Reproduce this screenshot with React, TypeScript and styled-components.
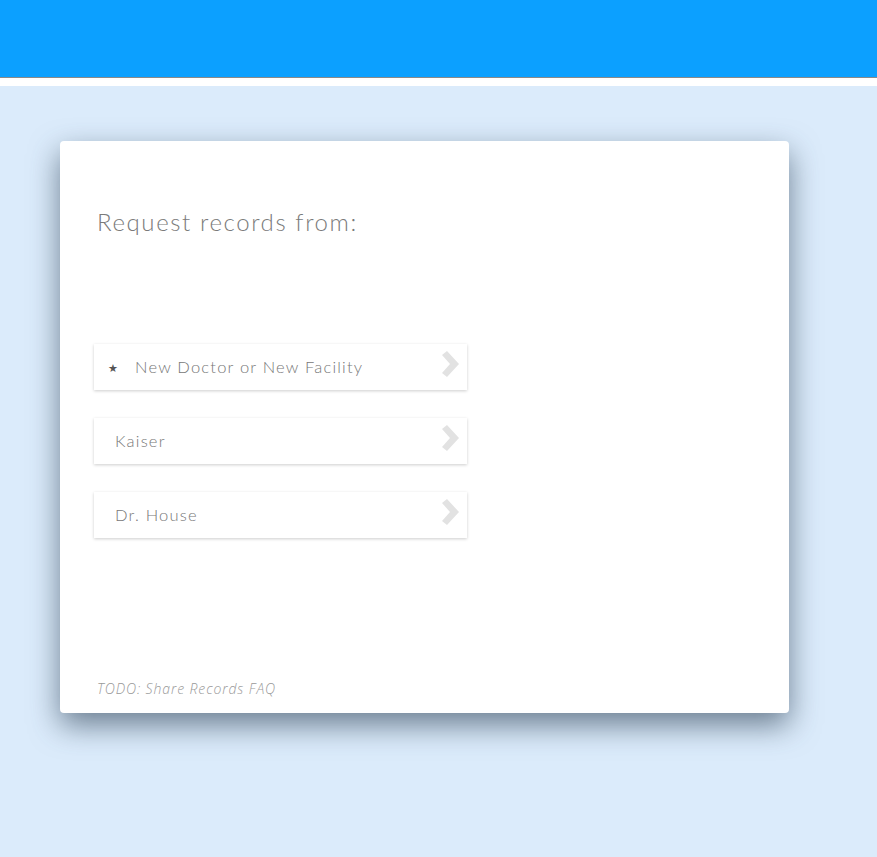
import styled, { createGlobalStyle } from "styled-components"

const GlobalStyle = createGlobalStyle`
  html, body {
    margin: 0;
    padding: 0;
    background: #dbebfb;
  }
  body {
    font-family: "Lato", "Open Sans", sans-serif;
  }
`

interface Provider {
  name: string
  isNew?: boolean
}

const providers: Provider[] = [
  { name: "New Doctor or New Facility", isNew: true },
  { name: "Kaiser" },
  { name: "Dr. House" },
]

const Chevron = () => (
  <svg width="20" height="26" viewBox="0 0 20 26">
    <path d="M2 4 L7 0 L19 13 L7 26 L2 22 L10 13 Z" fill="#e2e2e2" />
  </svg>
)

const App = () => {
  return (
    <Page>
      <GlobalStyle />
      <Header>
        <TopBar />
      </Header>
      <Content>
        <Card>
          <Title>Request records from:</Title>
          <List>
            {providers.map((p) => (
              <ProviderRow key={p.name}>
                {p.isNew && <Star>★</Star>}
                <ProviderName $indent={!p.isNew}>{p.name}</ProviderName>
                <ChevronBox>
                  <Chevron />
                </ChevronBox>
              </ProviderRow>
            ))}
          </List>
          <Footer>TODO: Share Records FAQ</Footer>
        </Card>
      </Content>
    </Page>
  )
}

export default App

const Page = styled.div`
  min-height: 857px;
  background: #dbebfb;
`

//Header
const Header = styled.div`
  background: #fff;
  padding-bottom: 8px;
`

const TopBar = styled.div`
  height: 77px;
  background: #0ca0ff;
  border-bottom: 1px solid #8a8a8a;
`

const Content = styled.div`
  background: #dbebfb;
  padding: 55px 0 0 60px;
  height: 716px;
`

const Card = styled.div`
  width: 729px;
  height: 572px;
  box-sizing: border-box;
  background: #fff;
  border-radius: 4px;
  box-shadow: 0 12px 30px rgba(50, 70, 90, 0.66);
  padding: 64px 0 0 34px;
  display: flex;
  flex-direction: column;
`

const Title = styled.h1`
  margin: 0 0 0 3px;
  font-family: "Lato", sans-serif;
  font-weight: 300;
  font-size: 24px;
  letter-spacing: 1.6px;
  color: #7a7a7a;
  line-height: 34px;
`

const List = styled.div`
  margin-top: 105px;
  display: flex;
  flex-direction: column;
  gap: 28px;
`

const ProviderRow = styled.div`
  width: 373px;
  height: 46px;
  display: flex;
  align-items: center;
  background: #fff;
  box-shadow: 0 1px 3px rgba(0, 0, 0, 0.2);
  padding: 0 7px 0 14px;
  box-sizing: border-box;
`

const Star = styled.span`
  font-size: 11px;
  color: #555;
  width: 27px;
  margin-top: 2px;
`

const ProviderName = styled.span<{ $indent: boolean }>`
  flex: 1;
  padding-left: ${(p) => (p.$indent ? "7px" : "0")};
  font-family: "Lato", sans-serif;
  font-weight: 300;
  font-size: 16.5px;
  letter-spacing: 1.2px;
  color: #777;
`

const ChevronBox = styled.div`
  display: flex;
  align-items: center;
  margin-top: -6px;
`

const Footer = styled.p`
  margin: auto 0 15px 3px;
  font-family: "Open Sans", sans-serif;
  font-style: italic;
  font-weight: 300;
  font-size: 14px;
  letter-spacing: 0.9px;
  color: #999;
`
